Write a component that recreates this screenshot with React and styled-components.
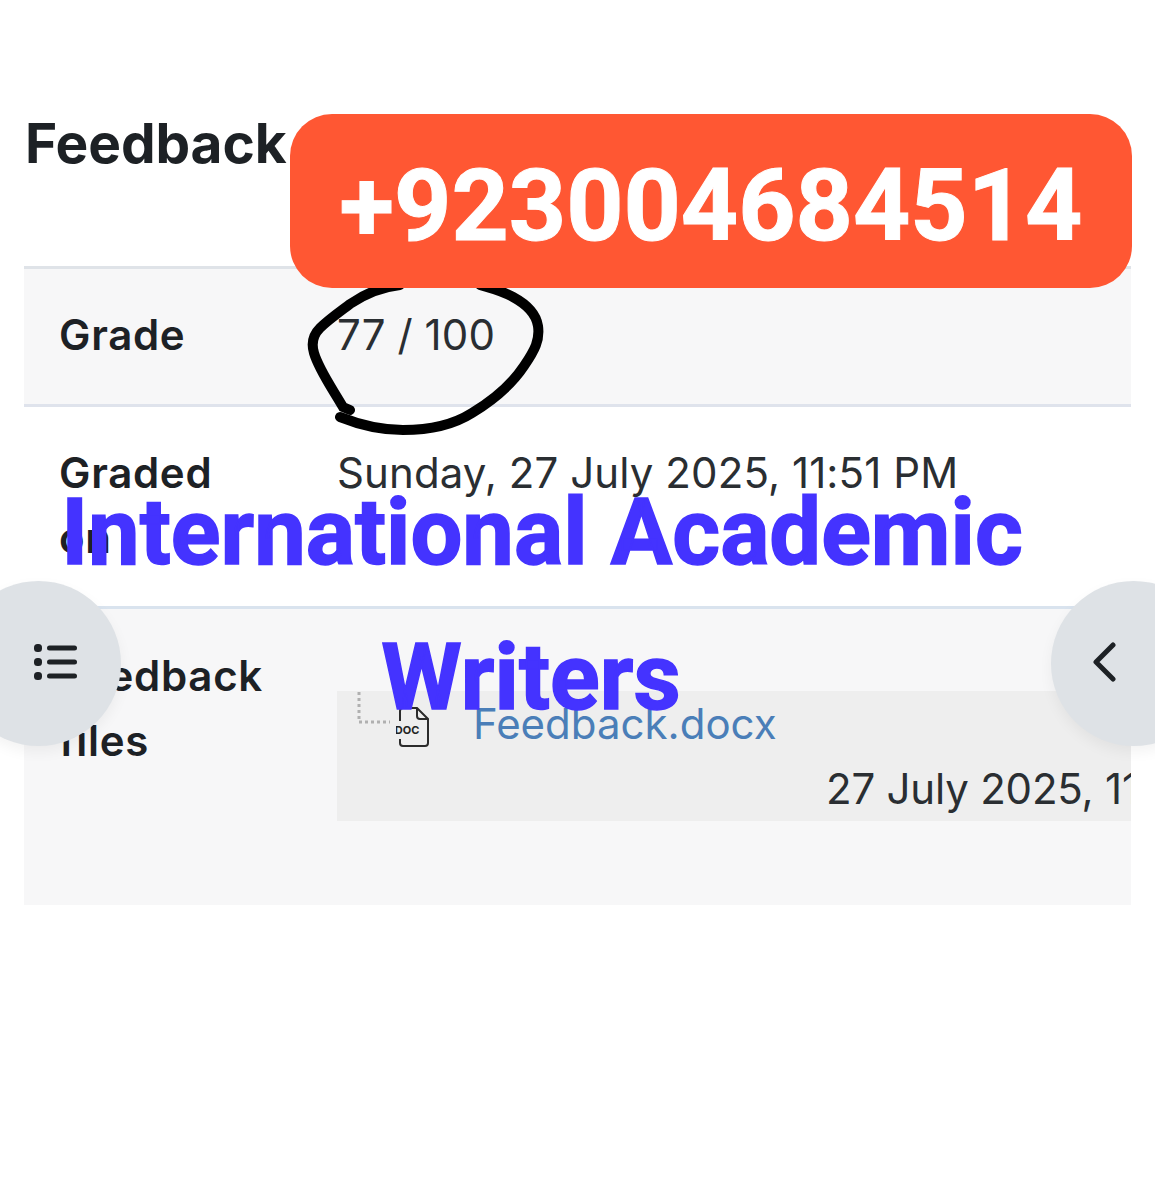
import React from "react";
import styled, { createGlobalStyle } from "styled-components";

const Global = createGlobalStyle`
  html, body { margin: 0; padding: 0; background: #fff; }
  body { font-family: Inter, "Liberation Sans", sans-serif; color: #1d2125; }
`;

const Page = styled.div`
  position: relative;
  width: 1155px;
  height: 1200px;
  overflow: hidden;
  background: #fff;
  padding: 112px 24px 0 24px;
  box-sizing: border-box;
`;

const Heading = styled.h2`
  margin: 0 0 91px 1px;
  font-size: 55px;
  line-height: 63px;
  font-weight: 700;
  color: #1d2125;
  letter-spacing: -0.1px;
`;

const Table = styled.div`
  display: flex;
  flex-direction: column;
`;

const Row = styled.div`
  display: grid;
  grid-template-columns: 278px minmax(0, 1fr);
  box-sizing: border-box;
  height: ${(p) => p.$height}px;
  padding: ${(p) => p.$top}px 0 0 35px;
  background: ${(p) => (p.$shaded ? "#f7f7f8" : "#fff")};
  border-top: 3px solid ${(p) => p.$rule};
`;

const Label = styled.div`
  font-size: 42px;
  line-height: 65px;
  font-weight: 600;
  color: #1d2125;
  letter-spacing: 0.7px;
  width: 210px;
`;

const Value = styled.div`
  font-size: 42px;
  line-height: 65px;
  font-weight: 400;
  color: #2a2e32;
  white-space: nowrap;
  letter-spacing: 0.1px;
`;

const FileBox = styled.div`
  margin-top: 48px;
  height: 130px;
  background: #eeeeee;
  overflow: hidden;
  position: relative;
  padding: 0 0 0 20px;
`;

const FileLine = styled.div`
  display: flex;
  align-items: center;
  height: 65px;
`;

const TreeIcon = styled.svg`
  width: 34px;
  height: 36px;
  margin-top: -31px;
  flex: none;
`;

const DocIcon = styled.svg`
  width: 34px;
  height: 40px;
  margin: 6px 0 0 5px;
  flex: none;
`;

const FileLink = styled.a`
  margin-left: 43px;
  color: #4a7eb8;
  font-size: 42px;
  text-decoration: none;
`;

const FileDate = styled.div`
  font-size: 42px;
  line-height: 65px;
  margin-left: 469px;
  white-space: nowrap;
  color: #2a2e32;
  letter-spacing: -0.2px;
`;

const PhoneBanner = styled.div`
  position: absolute;
  left: 290px;
  top: 114px;
  width: 842px;
  height: 174px;
  border-radius: 42px;
  background: #ff5733;
  color: #fff;
  font-family: Roboto, "Liberation Sans", sans-serif;
  font-weight: 700;
  font-size: 100px;
  line-height: 184px;
  text-align: center;
  white-space: nowrap;
  -webkit-text-stroke: 1px #fff;
`;

const Scribble = styled.svg`
  position: absolute;
  left: 300px;
  top: 280px;
  width: 250px;
  height: 160px;
`;

const Watermark = styled.div`
  position: absolute;
  left: 61px;
  top: 460px;
  width: 962px;
  font-family: Roboto, "Liberation Sans", sans-serif;
  font-weight: 700;
  font-size: 92px;
  line-height: 145px;
  color: #4433ff;
  text-align: center;
  white-space: nowrap;
  -webkit-text-stroke: 1.5px #4433ff;
`;

const WatermarkLine = styled.div`
  padding-right: ${(p) => p.$inset || 0}px;
`;

const Drawer = styled.button`
  position: absolute;
  top: 581px;
  ${(p) => (p.$side === "left" ? "left: -44px;" : "right: -61px;")}
  width: 165px;
  height: 165px;
  border: 0;
  padding: 0 0 3px;
  border-radius: 50%;
  background: #dee2e6;
  box-shadow: 0 6px 14px rgba(0, 0, 0, 0.05);
  display: flex;
  align-items: center;
  justify-content: center;
`;

const ListGlyph = styled.svg`
  width: 46px;
  height: 38px;
  margin-left: 34px;
`;

const ChevronGlyph = styled.svg`
  width: 24px;
  height: 40px;
  margin-right: 59px;
`;

export default function App() {
  return (
    <Page>
      <Global />
      <Heading>Feedback</Heading>
      <Table>
        <Row $shaded $height={138} $top={33} $rule="#dfe3e8">
          <Label>Grade</Label>
          <Value>77 / 100</Value>
        </Row>
        <Row $height={202} $top={33} $rule="#dfe3ec">
          <Label>Graded on</Label>
          <Value>Sunday, 27 July 2025, 11:51 PM</Value>
        </Row>
        <Row $shaded $height={299} $top={34} $rule="#d9e3ee">
          <Label>Feedback files</Label>
          <FileBox>
            <FileLine>
              <TreeIcon viewBox="0 0 34 36">
                <path d="M2 2V32H33" fill="none" stroke="#b0b0b0" strokeWidth="3" strokeDasharray="3 3" />
              </TreeIcon>
              <DocIcon viewBox="0 0 34 40">
                <path d="M4 14V4a3 3 0 0 1 3-3h14l11 11v24a3 3 0 0 1-3 3H7a3 3 0 0 1-3-3v-4" fill="none" stroke="#2b2b2b" strokeWidth="2" />
                <path d="M21 1v8a3 3 0 0 0 3 3h8" fill="none" stroke="#2b2b2b" strokeWidth="2" />
                <text x="11" y="27" textAnchor="middle" fontFamily="Inter, sans-serif" fontSize="11" fontWeight="700" fill="#222">DOC</text>
              </DocIcon>
              <FileLink href="#">Feedback.docx</FileLink>
            </FileLine>
            <FileDate>27 July 2025, 11:51 PM</FileDate>
          </FileBox>
        </Row>
      </Table>

      <Scribble viewBox="0 0 250 160" fill="none">
        <path d="M100 5C82 7 66 13 50 24C38 33 28 40 20 48C13 55 11 63 14 73C19 90 32 108 43 127L50 130" stroke="#000" strokeWidth="10" strokeLinecap="round" />
        <path d="M40 137C55 143 75 150 103 150C125 150 150 147 172 133C195 119 212 104 224 86C235 70 240 60 238 46C236 33 226 24 213 17C200 10 190 8 180 5" stroke="#000" strokeWidth="10" strokeLinecap="round" />
      </Scribble>

      <PhoneBanner>+923004684514</PhoneBanner>

      <Watermark>
        <WatermarkLine>International Academic</WatermarkLine>
        <WatermarkLine $inset={22}>Writers</WatermarkLine>
      </Watermark>

      <Drawer $side="left" aria-label="Open index">
        <ListGlyph viewBox="0 0 46 38">
          <g fill="#1d2125">
            <rect x="1" y="1" width="8" height="8" rx="3.5" />
            <rect x="1" y="15" width="8" height="8" rx="3.5" />
            <rect x="1" y="29" width="8" height="8" rx="3.5" />
            <rect x="14" y="2.5" width="30" height="5" rx="2.5" />
            <rect x="14" y="16.5" width="30" height="5" rx="2.5" />
            <rect x="14" y="30.5" width="30" height="5" rx="2.5" />
          </g>
        </ListGlyph>
      </Drawer>
      <Drawer $side="right" aria-label="Open blocks">
        <ChevronGlyph viewBox="0 0 24 40">
          <path d="M21 3L4 20L21 37" fill="none" stroke="#1d2125" strokeWidth="5" strokeLinecap="round" strokeLinejoin="round" />
        </ChevronGlyph>
      </Drawer>
    </Page>
  );
}
